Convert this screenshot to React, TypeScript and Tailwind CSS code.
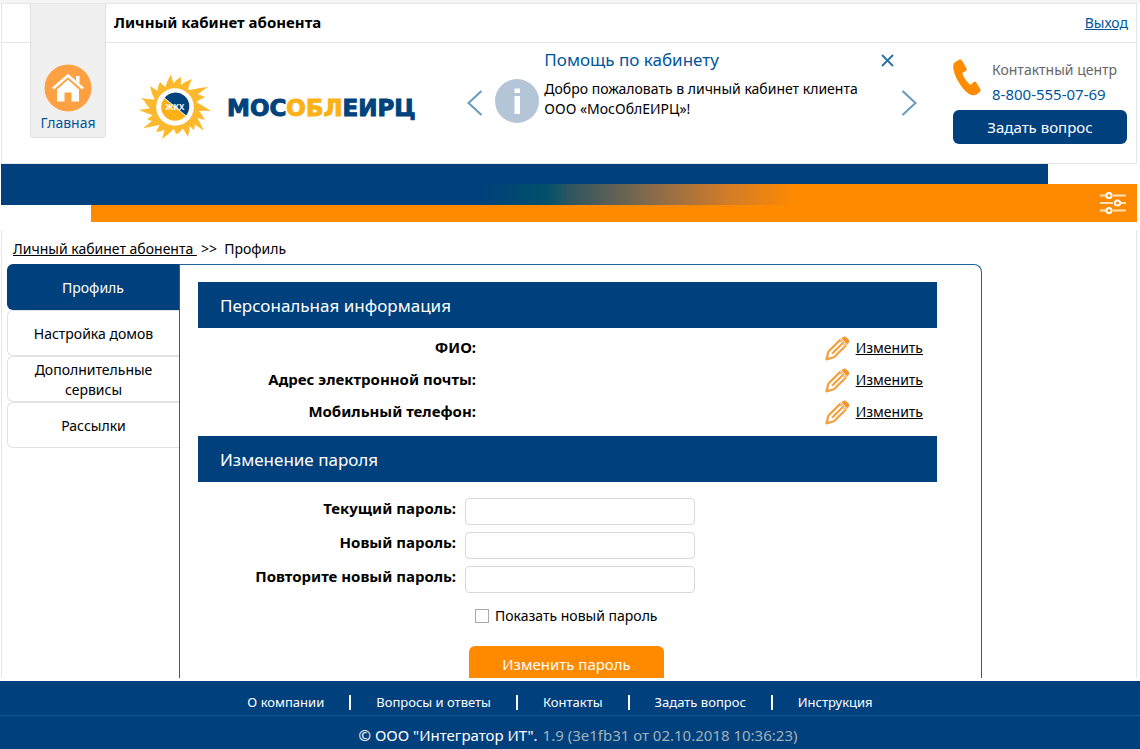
import React, { useState } from "react";

const CENTER = { x: 36, y: 33 };
const RAY_TIPS = [
  [32, 0], [42, 3], [53, 5], [69, 13], [66, 23], [72, 37], [66, 46], [65, 57], [55, 56],
  [49, 63], [37, 60], [23, 65], [17, 58], [4, 54], [8, 45], [0, 36], [6, 28], [2, 24],
  [11, 12], [21, 8],
];

function rayPath([tx, ty]: number[]) {
  const tip = Math.atan2(ty - CENTER.y, tx - CENTER.x);
  const at = (r: number, a: number) =>
    `${(CENTER.x + r * Math.cos(a)).toFixed(1)} ${(CENTER.y + r * Math.sin(a)).toFixed(1)}`;
  return `M${at(20, tip - 0.42)} Q${at(27, tip - 0.2)} ${tx} ${ty} Q${at(25, tip + 0.02)} ${at(20, tip + 0.14)}Z`;
}

function SunLogo() {
  return (
    <svg viewBox="0 0 72 66" className="h-[66px] w-[72px] shrink-0 overflow-visible" aria-hidden="true">
      {RAY_TIPS.map((tip) => (
        <path key={tip.join()} d={rayPath(tip)} fill="#fdb92e" />
      ))}
      <circle cx="36" cy="33" r="22" fill="#fdb92e" />
      <circle cx="36" cy="33" r="18.8" fill="#fff" />
      <circle cx="36" cy="33" r="13.8" fill="#fcb116" />
      <path d="M25.4 24.2 A13.8 13.8 0 1 1 46.6 41.8Z" fill="#00427c" />
      <path d="M23 22 L49 43.5" stroke="#fff" strokeWidth="1" />
      <text x="36" y="36" textAnchor="middle" fontSize="8" fontWeight="700" fill="#fff">
        ЖКХ
      </text>
    </svg>
  );
}

function HomeIcon() {
  return (
    <svg viewBox="0 0 48 48" className="size-12" aria-hidden="true">
      <circle cx="24" cy="24" r="23.5" fill="#ffa142" />
      <path d="M13 25.5 L24 15.5 L35 25.5 V37.5 H27.5 V28.5 H20.5 V37.5 H13Z" fill="#fff" />
      <path d="M9 25.5 L24 12 L39 25.5" fill="none" stroke="#ffa142" strokeWidth="5" />
      <path d="M9 24.5 L24 11.5 L39 24.5" fill="none" stroke="#fff" strokeWidth="2.8" />
      <path d="M32 12 H35.5 V19.5 L32 16.5Z" fill="#fff" />
    </svg>
  );
}

function InfoIcon() {
  return (
    <svg viewBox="0 0 44 44" className="size-11 shrink-0" aria-hidden="true">
      <circle cx="22" cy="22" r="22" fill="#b5c5d8" />
      <path d="M19.5 9.5h5.5v4.5h-5.5z M19.5 17h5.5v18h-5.5z" fill="#fff" />
    </svg>
  );
}

function Chevron({ direction }: { direction: "left" | "right" }) {
  return (
    <svg viewBox="0 0 16 28" className="h-7 w-4" fill="none" stroke="#6b9cc0" strokeWidth="2.2" aria-hidden="true">
      <path d={direction === "left" ? "M14.5 2 L1.5 14 L14.5 26" : "M1.5 2 L14.5 14 L1.5 26"} />
    </svg>
  );
}

function PhoneIcon() {
  return (
    <svg viewBox="0 0 28 37" className="h-[37px] w-7 shrink-0" aria-hidden="true">
      <path
        d="M1.5 3.5 L6.5 .6 Q8 0 8.9 1.3 L13.6 9.8 Q14.2 11.2 12.8 12 L10 13.6 Q9.3 14.2 9.7 15.5 Q12 21.5 16.5 25.2 Q17.5 26 18.5 25.2 L20.6 23 Q21.8 22 22.9 23 L27.4 30.2 Q28 31.5 27 32.4 Q23.5 36.6 19 36.2 Q14 35.2 7.8 26.5 Q1.6 17.5 .3 9.5 Q-.2 5.2 1.5 3.5Z"
        fill="#ff8c00"
      />
    </svg>
  );
}

function SettingsIcon() {
  return (
    <svg viewBox="0 0 26 22" className="h-[22px] w-[26px]" fill="none" stroke="#fff" strokeWidth="2" aria-hidden="true">
      <path d="M0 3.5 H6 M13 3.5 H26 M0 11 H13 M21 11 H26 M0 18.5 H6 M13 18.5 H26" stroke="#ffe0b8" />
      <circle cx="9" cy="3.5" r="2.6" />
      <circle cx="17.5" cy="11" r="2.6" />
      <circle cx="9" cy="18.5" r="2.6" />
    </svg>
  );
}

function PencilIcon() {
  return (
    <svg viewBox="0 0 25 25" className="size-[25px]" fill="none" stroke="#f3a040" strokeWidth="2.2" aria-hidden="true">
      <path d="M1.4 23.4 L3.4 15.5 L15.5 3.6 L21.2 9.3 L9 21.2Z" strokeLinejoin="round" />
      <path d="M1 24 L1.8 19.5 L5 22.8Z" fill="#f3a040" stroke="none" />
      <path d="M7 17.8 L17.6 7.2" strokeWidth="2.2" />
      <path d="M16.6 2.4 Q18.8 -.2 21 1 L23.8 3.8 Q25.2 6 22.4 8.2Z" fill="#f3962e" stroke="none" />
      <path d="M14.8 2.8 L22.2 10.2" stroke="#fff" strokeWidth=".8" />
    </svg>
  );
}

const tabs = ["Профиль", "Настройка домов", "Дополнительные сервисы", "Рассылки"];
const personal = ["ФИО:", "Адрес электронной почты:", "Мобильный телефон:"];
const passwords = [
  { id: "current", label: "Текущий пароль:" },
  { id: "next", label: "Новый пароль:" },
  { id: "repeat", label: "Повторите новый пароль:" },
];
const footerLinks = ["О компании", "Вопросы и ответы", "Контакты", "Задать вопрос", "Инструкция"];

function SectionTitle({ children }: { children: React.ReactNode }) {
  return (
    <h2 className="flex h-[46px] items-center bg-[#00407c] px-[22px] pt-[2px] text-[17px] text-white">{children}</h2>
  );
}

function Header() {
  return (
    <header className="grid grid-cols-[28px_76px_1fr] grid-rows-[39px_120px] border border-[#e6e6e6]">
      <div className="border-b border-[#e6e6e6]" />
      <a
        href="#home"
        className="row-span-2 flex h-[134px] flex-col items-center justify-end rounded-b border border-t-0 border-[#dedede] bg-[#f0f0f0] pb-1 text-[#00569b]"
      >
        <HomeIcon />
        <span className="mt-px leading-5">Главная</span>
      </a>
      <div className="flex items-center justify-between border-b border-[#e6e6e6] px-2">
        <h1 className="text-[15px] font-bold">Личный кабинет абонента</h1>
        <a href="#logout" className="text-[#00569b] underline">Выход</a>
      </div>
      <div className="col-start-3 row-start-2 flex justify-between">
        <a href="#logo" aria-label="МосОблЕИРЦ" className="mt-[31px] ml-[33px] flex h-[66px] items-center gap-4">
          <SunLogo />
          <span className="pt-[2px] font-['DejaVu_Sans',sans-serif] text-[23px] leading-none font-bold text-[#00427c] [-webkit-text-stroke:1px]">
            МОС<span className="text-[#fcb116]">ОБЛ</span>ЕИРЦ
          </span>
        </a>
        <section className="mt-[6px] mr-4 ml-8 flex items-start">
          <button type="button" aria-label="Назад" className="mt-10 mr-3">
            <Chevron direction="left" />
          </button>
          <div className="mt-[30px] mr-[5px]">
            <InfoIcon />
          </div>
          <div className="w-[350px]">
            <div className="flex h-[22px] items-center justify-between">
              <h2 className="text-[17px] text-[#00569b]">Помощь по кабинету</h2>
              <button type="button" aria-label="Закрыть">
                <svg viewBox="0 0 13 13" className="size-[13px]" stroke="#2b6f9f" strokeWidth="1.8" aria-hidden="true">
                  <path d="M1 1 L12 12 M12 1 L1 12" />
                </svg>
              </button>
            </div>
            <p className="mt-2 leading-5">
              Добро пожаловать в личный кабинет клиента
              <br />
              ООО «МосОблЕИРЦ»!
            </p>
          </div>
          <button type="button" aria-label="Вперёд" className="mt-10 ml-[7px]">
            <Chevron direction="right" />
          </button>
        </section>
        <section className="mt-[14px] mr-[9px] w-[174px]">
          <div className="flex gap-[11px]">
            <div className="pt-[2px]">
              <PhoneIcon />
            </div>
            <div className="flex flex-col whitespace-nowrap leading-[25px]">
              <span className="text-[#666]">Контактный центр</span>
              <a href="tel:88005550769" className="text-[15px] text-[#00569b]">8-800-555-07-69</a>
            </div>
          </div>
          <button type="button" className="mt-[3px] h-[34px] w-full rounded-md bg-[#00407c] pt-[2px] text-[15px] text-white">
            Задать вопрос
          </button>
        </section>
      </div>
    </header>
  );
}

function Ribbon() {
  return (
    <div className="relative">
      <div className="mr-[89px] h-5 bg-[#00407c]" />
      <div className="h-[21px] bg-[linear-gradient(90deg,#00407c_0%,#00407c_42%,#00506a_48%,#2d5560_50%,#846a4c_57%,#d27c28_64%,#ff8a00_70%)]" />
      <div className="ml-[90px] h-[17px] bg-[#ff8a00]" />
      <button type="button" aria-label="Настройки" className="absolute right-[11px] bottom-2">
        <SettingsIcon />
      </button>
    </div>
  );
}

export default function App() {
  const [visible, setVisible] = useState(false);
  return (
    <div className="flex h-screen flex-col bg-white font-['Noto_Sans','DejaVu_Sans',sans-serif] text-sm text-black">
      <main className="min-h-0 flex-1 overflow-y-auto border-t-[3px] border-[#f4f4f4] pr-[3px] pl-px [scrollbar-width:none]">
        <Header />
        <Ribbon />
        <div className="mt-2 border-x border-[#e6e6e6] px-[5px]">
          <nav className="flex h-[34px] items-center px-[6px] pt-1 leading-5">
            <a href="#cabinet" className="pr-1 whitespace-pre underline">Личный кабинет абонента </a>
            <span className="whitespace-pre">&gt;&gt;  Профиль</span>
          </nav>
          <div className="flex max-w-[975px] items-start">
            <nav className="flex w-[172px] shrink-0 flex-col">
              {tabs.map((tab, i) => (
                <a
                  key={tab}
                  href="#tab"
                  className={
                    i === 0
                      ? "flex h-[46px] items-center justify-center rounded-l-md bg-[#00407c] pt-[2px] text-white"
                      : "flex h-[46px] items-center justify-center rounded-l-md border border-r-0 border-[#e2e2e2] px-5 pt-[2px] text-center leading-5"
                  }
                >
                  {tab}
                </a>
              ))}
            </nav>
            <div className="h-[460px] flex-1 rounded-tr-lg border border-b-0 border-[#1c6697] pt-[17px] pr-11 pl-[18px]">
              <SectionTitle>Персональная информация</SectionTitle>
              <table className="my-1 w-full">
                <tbody>
                  {personal.map((label) => (
                    <tr key={label} className="h-8">
                      <th scope="row" className="w-[278px] text-right text-[15px] font-bold whitespace-nowrap">{label}</th>
                      <td>
                        <a href="#edit" className="mr-[14px] flex items-center justify-end gap-[6px]">
                          <PencilIcon />
                          <span className="underline">Изменить</span>
                        </a>
                      </td>
                    </tr>
                  ))}
                </tbody>
              </table>
              <div className="mt-2">
                <SectionTitle>Изменение пароля</SectionTitle>
              </div>
              <form className="mt-4" onSubmit={(e) => e.preventDefault()}>
                <div className="flex flex-col gap-[7px]">
                  {passwords.map(({ id, label }) => (
                    <div key={id} className="flex gap-[9px]">
                      <label htmlFor={id} className="w-[258px] text-right text-[15px] leading-5 font-bold whitespace-nowrap">
                        {label}
                      </label>
                      <input
                        id={id}
                        type={visible ? "text" : "password"}
                        className="h-[27px] w-[230px] rounded border border-[#d8d8d8] px-2"
                      />
                    </div>
                  ))}
                </div>
                <label className="mt-3 ml-[277px] flex h-[22px] items-center gap-[6px]">
                  <input
                    type="checkbox"
                    checked={visible}
                    onChange={(e) => setVisible(e.target.checked)}
                    className="size-[14px] appearance-none border border-[#a8a8a8] bg-white checked:bg-[#00407c]"
                  />
                  Показать новый пароль
                </label>
                <button
                  type="submit"
                  className="mt-[19px] ml-[271px] h-[37px] w-[195px] rounded-md bg-[#ff8a00] text-[15px] text-white"
                >
                  Изменить пароль
                </button>
              </form>
            </div>
          </div>
        </div>
      </main>
      <footer className="border-t-[3px] border-white text-white">
        <div className="bg-[#00407c]">
          <ul className="flex h-[35px] items-center justify-center border-b border-[#0b5c93] pt-2 pr-5 text-[13px]">
            {footerLinks.map((link, i) => (
              <li key={link} className="flex items-center">
                {i > 0 && <span className="mx-[25px] h-[15px] w-[2px] bg-white" />}
                <a href="#footer">{link}</a>
              </li>
            ))}
          </ul>
          <p className="flex h-[33px] items-center justify-center gap-[5px] pt-[6px] pl-4 text-[15px]">
            <span>© ООО "Интегратор ИТ".</span>
            <span className="text-[#a3b0b8]">1.9 (3e1fb31 от 02.10.2018 10:36:23)</span>
          </p>
        </div>
      </footer>
    </div>
  );
}
